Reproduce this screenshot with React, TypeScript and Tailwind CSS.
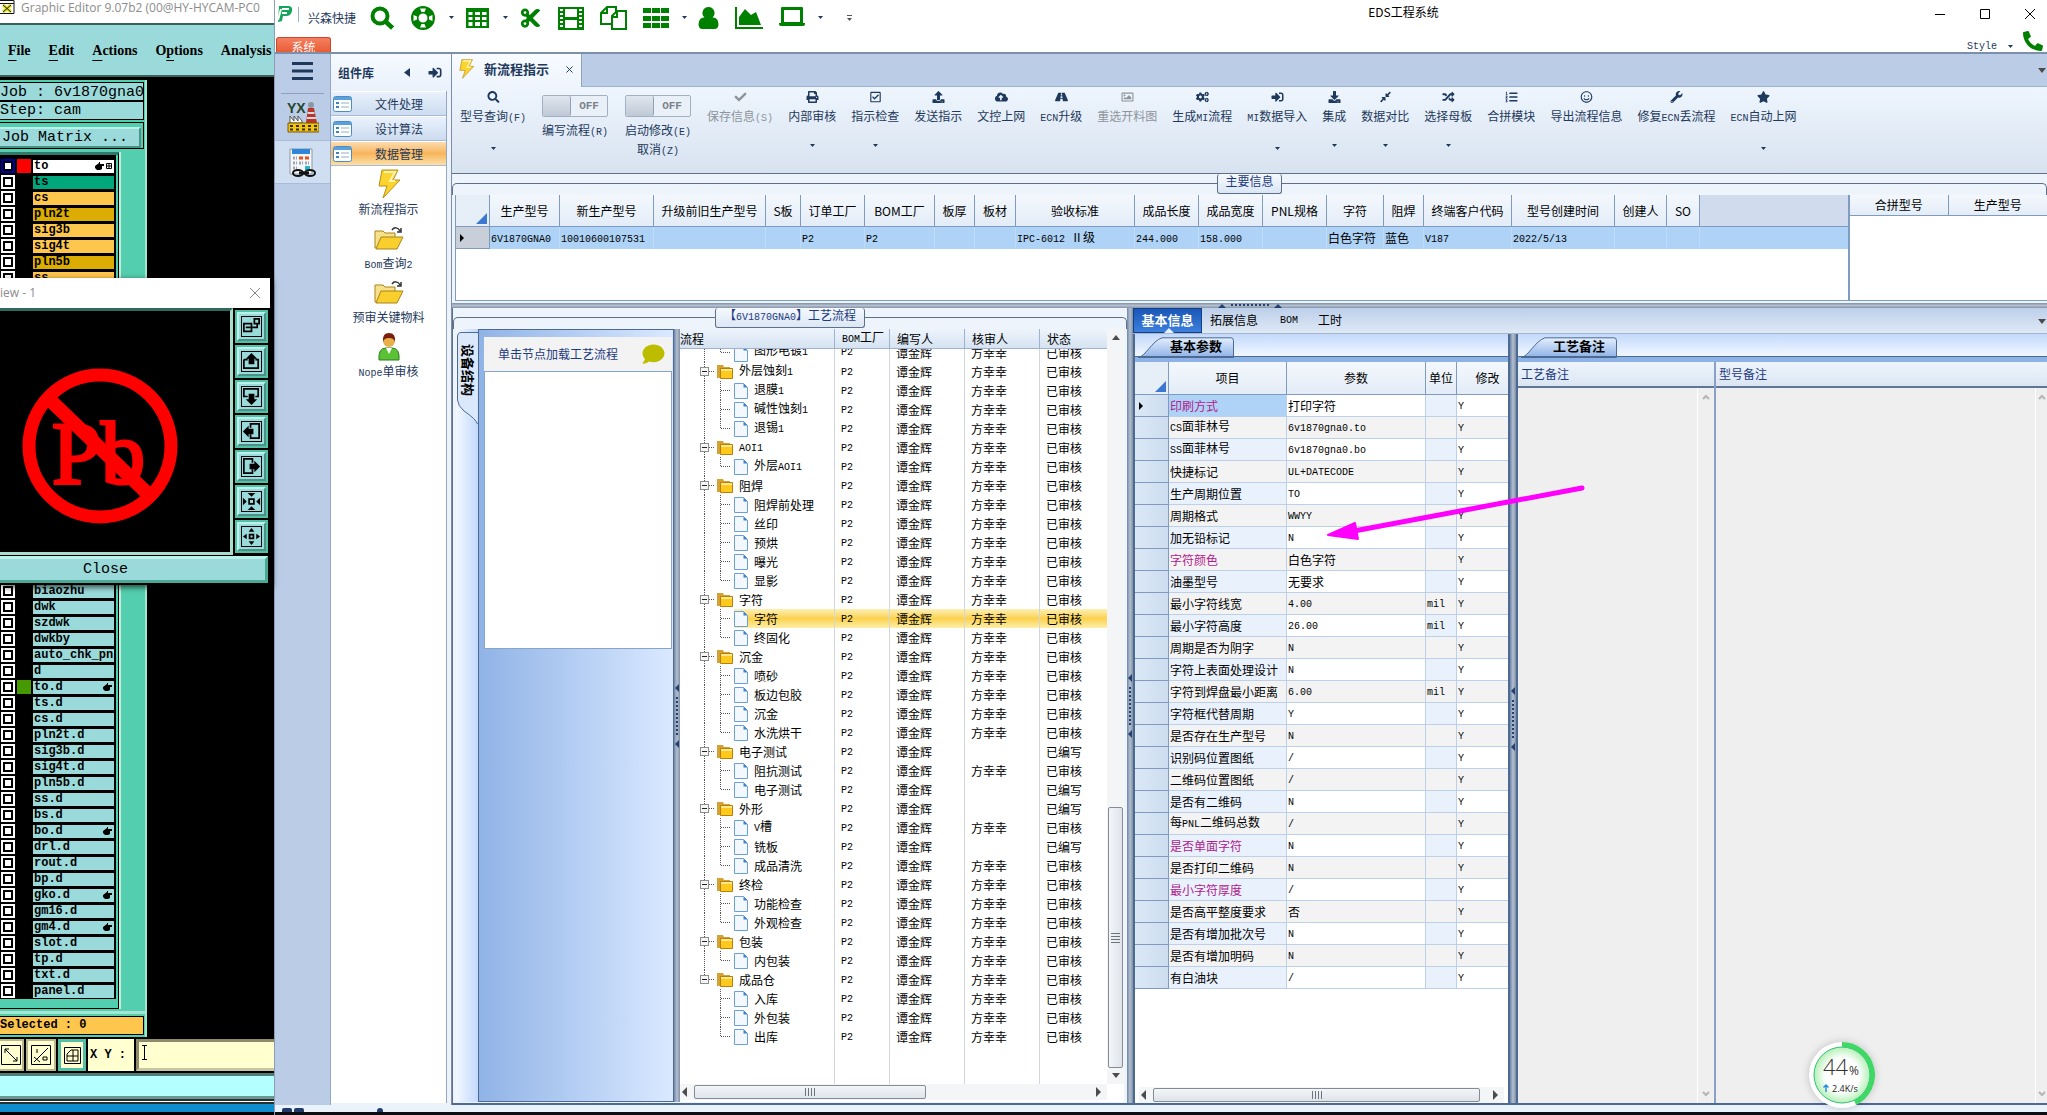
import React from 'react';
import {
  FaSearch, FaCut, FaPhone, FaCheck, FaPrint, FaRegCheckSquare, FaUpload, FaCloudUploadAlt, FaRoad,
  FaRegImage, FaCogs, FaSignInAlt, FaDownload, FaCompressAlt, FaRandom, FaListOl, FaRegSmile, FaWrench, FaStar, FaComment,
} from 'react-icons/fa';

// ---------- data ----------

interface Layer {
  name: string;
  bg: string;
  swatch?: string;
  hand?: boolean;
  active?: boolean;
}

const topLayers: Layer[] = [
  { name: 'to', bg: 'bg-white', swatch: 'bg-[#ff0000]', hand: true, active: true },
  { name: 'ts', bg: 'bg-[#00a67c]' },
  { name: 'cs', bg: 'bg-[#ffc64e]' },
  { name: 'pln2t', bg: 'bg-[#dcad00]' },
  { name: 'sig3b', bg: 'bg-[#ffc64e]' },
  { name: 'sig4t', bg: 'bg-[#ffc64e]' },
  { name: 'pln5b', bg: 'bg-[#dcad00]' },
  { name: 'ss', bg: 'bg-[#ffc64e]' },
];

const handLayers = ['to.d', 'bo.d', 'gko.d', 'gm4.d'];

const bottomLayers: Layer[] = [
  'biaozhu', 'dwk', 'szdwk', 'dwkby', 'auto_chk_pnl', 'd', 'to.d', 'ts.d', 'cs.d', 'pln2t.d', 'sig3b.d', 'sig4t.d', 'pln5b.d',
  'ss.d', 'bs.d', 'bo.d', 'drl.d', 'rout.d', 'bp.d', 'gko.d', 'gm16.d', 'gm4.d', 'slot.d', 'tp.d', 'txt.d', 'panel.d',
].map((name) => ({
  name,
  bg: 'bg-[#9bdada]',
  swatch: name === 'to.d' ? 'bg-[#459a00]' : undefined,
  hand: handLayers.includes(name),
}));

const mainColumns: [string, string, string][] = [
  ['生产型号', 'w-[70px]', '6V1870GNA0'],
  ['新生产型号', 'w-[94px]', '10010600107531'],
  ['升级前旧生产型号', 'w-[112px]', ''],
  ['S板', 'w-[35px]', ''],
  ['订单工厂', 'w-[64px]', 'P2'],
  ['BOM工厂', 'w-[70px]', 'P2'],
  ['板厚', 'w-[40px]', ''],
  ['板材', 'w-[41px]', ''],
  ['验收标准', 'w-[119px]', 'IPC-6012 Ⅱ级'],
  ['成品长度', 'w-[64px]', '244.000'],
  ['成品宽度', 'w-[64px]', '158.000'],
  ['PNL规格', 'w-[64px]', ''],
  ['字符', 'w-[57px]', '白色字符'],
  ['阻焊', 'w-[40px]', '蓝色'],
  ['终端客户代码', 'w-[88px]', 'V187'],
  ['型号创建时间', 'w-[103px]', '2022/5/13'],
  ['创建人', 'w-[52px]', ''],
  ['SO', 'w-[33px]', ''],
];

interface FlowNode {
  name: string;
  folder?: boolean;
  last?: boolean;
  pending?: boolean; // written, not audited yet
  reviewer?: boolean;
}

const flow: [string, boolean, [string, boolean][]][] = [
  ['外层蚀刻1', true, [['退膜1', true], ['碱性蚀刻1', true], ['退锡1', true]]],
  ['AOI1', true, [['外层AOI1', true]]],
  ['阻焊', true, [['阻焊前处理', true], ['丝印', true], ['预烘', true], ['曝光', true], ['显影', true]]],
  ['字符', true, [['字符', true], ['终固化', true]]],
  ['沉金', true, [['喷砂', true], ['板边包胶', true], ['沉金', true], ['水洗烘干', true]]],
  ['电子测试', false, [['阻抗测试', true], ['电子测试', false]]],
  ['外形', false, [['V槽', true], ['铣板', false], ['成品清洗', true]]],
  ['终检', true, [['功能检查', true], ['外观检查', true]]],
  ['包装', true, [['内包装', true]]],
  ['成品仓', true, [['入库', true], ['外包装', true], ['出库', true]]],
];

const flowNodes: FlowNode[] = flow.flatMap(([name, done, children]) => [
  { name, folder: true, reviewer: done, pending: !done },
  ...children.map(([child, ok], i) => ({ name: child, reviewer: ok, pending: !ok, last: i === children.length - 1 })),
]);

const params: [string, string, string?][] = [
  ['印刷方式', '打印字符'],
  ['CS面菲林号', '6v1870gna0.to'],
  ['SS面菲林号', '6v1870gna0.bo'],
  ['快捷标记', 'UL+DATECODE'],
  ['生产周期位置', 'TO'],
  ['周期格式', 'WWYY'],
  ['加无铅标记', 'N'],
  ['字符颜色', '白色字符'],
  ['油墨型号', '无要求'],
  ['最小字符线宽', '4.00', 'mil'],
  ['最小字符高度', '26.00', 'mil'],
  ['周期是否为阴字', 'N'],
  ['字符上表面处理设计', 'N'],
  ['字符到焊盘最小距离', '6.00', 'mil'],
  ['字符框代替周期', 'Y'],
  ['是否存在生产型号', 'N'],
  ['识别码位置图纸', '/'],
  ['二维码位置图纸', '/'],
  ['是否有二维码', 'N'],
  ['每PNL二维码总数', '/'],
  ['是否单面字符', 'N'],
  ['是否打印二维码', 'N'],
  ['最小字符厚度', '/'],
  ['是否高平整度要求', '否'],
  ['是否有增加批次号', 'N'],
  ['是否有增加明码', 'N'],
  ['有白油块', '/'],
];

const required = ['印刷方式', '字符颜色', '是否单面字符', '最小字符厚度'];

// ---------- shared bits ----------

// Latin runs are half the width of a CJK glyph
const T = ({ children }: { children: string }) => (
  <>
    {children.split(/([\x20-\x7e]+)/).map((part, i) =>
      i % 2 ? <span key={i} className="font-['Liberation_Mono',monospace] text-[10px] whitespace-pre">{part}</span> : part
    )}
  </>
);

const Caret = ({ className = '' }: { className?: string }) => (
  <svg className={`w-[5px] h-[3px] shrink-0 ${className}`} viewBox="0 0 5 3"><path d="M0 0h5L2.5 3z" fill="currentColor" /></svg>
);

const Triangle = ({ d }: { d: 'up' | 'down' | 'left' | 'right' }) => {
  const paths = { up: 'M1 7h8L5 2z', down: 'M1 3h8L5 8z', left: 'M7 0v10L2 5z', right: 'M3 0v10l5-5z' };
  return <svg className="w-[10px] h-[10px] shrink-0" viewBox="0 0 10 10"><path d={paths[d]} fill="#4c4c4c" /></svg>;
};

const VHandle = () => (
  <svg className="w-[5px] h-[64px]" viewBox="0 0 5 64">
    <path d="M5 0v8L1 4zM5 56v8l-4-4z" fill="#24416f" />
    <path d="M3 13v38" stroke="#24416f" strokeWidth="2" strokeDasharray="2 2" />
  </svg>
);

const VSplitter = () => (
  <div className="w-[6px] shrink-0 bg-linear-to-r from-[#6f86a8] via-[#b4c0cf] to-[#7f8fa5] flex items-center">
    <VHandle />
  </div>
);

const HScroll = ({ thumb }: { thumb: string }) => (
  <div className="h-[16px] shrink-0 bg-[#f4f5f7] flex items-center justify-between">
    <button aria-label="左移"><Triangle d="left" /></button>
    <div className="flex-1 flex h-[14px] pl-[4px]">
      <div className={`${thumb} border border-[#848b95] rounded-[2px] bg-linear-to-b from-[#f3f5f8] to-[#dfe4ea] flex items-center justify-center gap-[2px]`}>
        {[0, 1, 2, 3].map((i) => <i key={i} className="w-px h-[8px] bg-[#6d747d]" />)}
      </div>
    </div>
    <button aria-label="右移" className="mr-[4px]"><Triangle d="right" /></button>
  </div>
);

const GroupCaption = ({ children, width }: { children: string; width: string }) => (
  <div className="relative h-[21px] shrink-0 flex justify-center">
    <div className="absolute inset-x-0 top-[9px] h-[12px] border-t border-x border-[#5f708b] rounded-t-[5px]" />
    <div className={`relative ${width} h-[20px] border border-t-0 border-[#5f708b] rounded-[3px] bg-linear-to-b from-[#f5f9fe] to-[#dbe7f4] text-center text-[12px] leading-[14px] text-[#1e3a80]`}>
      <T>{children}</T>
    </div>
  </div>
);

const SlantTab = ({ children }: { children: string }) => (
  <div className="h-[28px] shrink-0 bg-linear-to-b from-[#c3d9fb] to-[#f3f8ff] relative border-b-[5px] border-[#8db2e6]">
    <svg className="absolute left-[3px] top-[3px] w-[98px] h-[21px]" viewBox="0 0 98 21">
      <defs>
        <linearGradient id="slant" x1="0" y1="0" x2="0" y2="1">
          <stop offset="0" stopColor="#e3eefd" /><stop offset="1" stopColor="#8db2e6" />
        </linearGradient>
      </defs>
      <path d="M0 20.5C7 20 14 4 24 .8H93q2.500 0 2.500 3V20.500z" fill="url(#slant)" stroke="#4c6a94" />
    </svg>
    <div className="absolute inset-x-0 bottom-0 h-px bg-[#4c6a94]" />
    <button className="relative block ml-[35px] mt-[3px] text-[13px] leading-[18px] font-bold text-black">{children}</button>
  </div>
);

// ---------- left CAM window ----------

const Hand = () => (
  <svg className="w-[9px] h-[8px]" viewBox="0 0 9 8"><path d="M0 4l4-3V0h1v2h4v2H7v3L5 8H2L0 6z" fill="#000" /></svg>
);

const LayerRow: React.FC<{ layer: Layer }> = ({ layer }) => (
  <label className="flex h-[16px] shrink-0 items-center">
    <input
      type="checkbox"
      aria-label={layer.name}
      className={`appearance-none w-[14px] h-[14px] ml-px border-[2px] outline-[2px] outline-offset-[-4px] outline-black bg-white ${layer.active ? 'border-[#0000a0]' : 'border-white'}`}
    />
    <span className={`w-[14px] h-[14px] ml-[2px] ${layer.swatch ?? 'bg-black'}`} />
    <span className={`w-[81px] h-[13px] ml-[2px] pl-px pr-[2px] flex items-center overflow-hidden ${layer.bg}`}>
      <span className="flex-1 whitespace-nowrap font-['Liberation_Mono',monospace] font-bold text-[12px] leading-[13px]">{layer.name}</span>
      {layer.hand && <Hand />}
      {layer.active && <svg className="w-[6px] h-[6px] ml-[2px]" viewBox="0 0 6 6"><path d="M.5.5h5v5h-5zM3 0v6M0 3h6" fill="none" stroke="#000" /></svg>}
    </span>
  </label>
);

const viewIcons: string[] = [
  'M3 8h8v8H3zM14 3h5v5h-5zM5 12h5M12 12h5V8',
  'M3 9h4M15 9h3v9H3V9',
  'M7 11H3V3h15v8h-3',
  'M10 7V3h9v15h-9v-4',
  'M12 7V3H3v15h9v-4',
  'M8.500 8.500h5v5h-5z',
  'M9 9h4v4H9z',
];
const viewFills: string[] = [
  '',
  'M11 2L5 8h3v6h6V8h3z',
  'M8 8h6v6h3l-6 6-6-6h3z',
  'M13 8v6H8v3l-6-6 6-6v3z',
  'M9 8v6h5v3l6-6-6-6v3z',
  'M7 2h8l-4 4zM7 20h8l-4-4zM2 7v8l4-4zM20 7v8l-4-4z',
  'M8 6h6l-3-4zM8 16h6l-3 4zM6 8v6l-4-3zM16 8v6l4-3z',
];

const ViewDialog = () => (
  <div className="absolute left-0 top-[278px] w-[270px] shadow-[2px_2px_6px_rgba(0,0,0,0.7)] bg-black">
    <div className="h-[30px] bg-white flex items-center justify-between pr-[9px] font-['Open_Sans',sans-serif] text-[12px] text-[#8c8c8c]">
      <span>iew - 1</span>
      <button aria-label="关闭视图">
        <svg className="w-[12px] h-[12px]" viewBox="0 0 12 12"><path d="M1 1l10 10M11 1L1 11" stroke="#8a8a8a" /></svg>
      </button>
    </div>
    <div className="flex">
      <div className="flex-1 h-[247px] border-t-[3px] border-t-[#2f6a5e] border-r-[3px] border-b-[3px] border-[#a8dccd] bg-black">
        <svg className="w-full h-full" viewBox="0 0 230 241" preserveAspectRatio="xMinYMin meet">
          <circle cx="100" cy="135" r="71" fill="none" stroke="#f00" strokeWidth="13" />
          <text x="52" y="172" fill="#f00" stroke="#f00" strokeWidth="3" fontFamily="Liberation Serif, serif" fontSize="88">Pb</text>
          <path d="M50 89l96 92" stroke="#f00" strokeWidth="14" />
        </svg>
      </div>
      <div className="w-[37px] pt-[2px] pl-[2px] flex flex-col gap-[2px]">
        {viewIcons.map((d, i) => (
          <button key={d} aria-label={`视图操作${i + 1}`} className="w-[33px] h-[33px] border-[2px] border-[#53bfa5] bg-[#9bdada] flex items-center justify-center">
            <span className="w-[29px] h-[29px] border-[2px] border-t-[#b9f2ea] border-l-[#b9f2ea] border-r-[#4b9186] border-b-[#4b9186] flex items-center justify-center">
              <svg className="w-[21px] h-[21px]" viewBox="0 0 22 22">
                <rect x=".5" y=".5" width="21" height="21" fill="none" stroke="#000" />
                <path d={d} fill="none" stroke="#000" strokeWidth="1.800" />
                <path d={viewFills[i]} fill="#000" />
              </svg>
            </span>
          </button>
        ))}
      </div>
    </div>
    <button className="w-[268px] h-[27px] mt-px mb-[2px] border-[3px] border-l-0 border-t-[#b9f2ea] border-r-[#4ba894] border-b-[#4ba894] bg-[#9bdada] flex items-center justify-center pr-[54px] font-['Liberation_Mono',monospace] text-[15px] leading-none text-black">
      Close
    </button>
  </div>
);

const CamWindow = () => (
  <div className="relative w-[274px] shrink-0 h-full bg-black flex flex-col overflow-hidden">
    <div className="h-[23px] shrink-0 bg-white flex items-start gap-[6px] font-['Open_Sans',sans-serif] text-[12px] leading-[16px] text-[#8c8c8c]">
      <svg className="w-[15px] h-[15px] shrink-0" viewBox="0 0 15 15">
        <path d="M-1 .5h15v13H-1zM-1 3.500h15" fill="#fff" stroke="#111" />
        <path d="M3 5l8 7M11 5l-8 7" stroke="#e3e300" strokeWidth="3" />
        <path d="M3 5l8 7M11 5l-8 7" stroke="#222" />
      </svg>
      <span className="whitespace-nowrap">Graphic Editor 9.07b2 (00@HY-HYCAM-PC0</span>
    </div>
    <nav className="h-[54px] shrink-0 border-t-[2px] border-b-[2px] border-[#35635c] bg-[#9bdada] flex items-center gap-[18px] pl-2 font-['Liberation_Serif',serif] font-bold text-[14px] text-black">
      <button className="shrink-0"><u className="underline-offset-[5px]">F</u>ile</button>
      <button className="shrink-0"><u className="underline-offset-[5px]">E</u>dit</button>
      <button className="shrink-0"><u className="underline-offset-[5px]">A</u>ctions</button>
      <button className="shrink-0">O<u className="underline-offset-[5px]">p</u>tions</button>
      <button className="shrink-0">Analysis</button>
    </nav>

    <div className="w-[147px] flex-1 min-h-0 mt-[3px] flex flex-col bg-[#53ceae] border-r-[2px] border-[#a3e6d3] font-['Liberation_Mono',monospace]">
      <div className="h-[19px] mt-[2px] mr-px border border-l-0 border-black bg-[#9bdada] text-[15px] leading-[19px] whitespace-nowrap overflow-hidden">Job : 6v1870gna0</div>
      <div className="h-[19px] mr-px border border-l-0 border-black bg-[#9bdada] text-[15px] leading-[18px]">Step: cam</div>
      <div className="h-[27px] mt-[2px] mr-px border border-l-0 border-black bg-[#53ceae] p-[2px] pl-0">
        <button className="w-full h-full border-[2px] border-l-0 border-t-[#b9f2ea] border-r-[#4b9186] border-b-[#4b9186] bg-[#9bdada] pl-[2px] text-left text-[15px] leading-[15px] text-black">Job Matrix ...</button>
      </div>
      <div className="flex-1 min-h-0 mt-[3px] flex">
        <div className="w-[119px] h-full border border-l-0 border-black flex flex-col pb-[9px] border-t-[3px] border-t-[#2f7a6a]">
          <div className="w-[116px] flex-1 bg-black flex flex-col min-h-0 justify-between pt-[3px]">
            <div className="flex flex-col">{topLayers.map((l) => <LayerRow key={l.name} layer={l} />)}</div>
            <div className="flex flex-col">{bottomLayers.map((l) => <LayerRow key={l.name} layer={l} />)}</div>
          </div>
        </div>
        <div className="w-[2px] bg-[#bfeedd]" />
      </div>
      <div className="h-[3px] mt-[2px] bg-[#a3e6d3]" />
      <div className="h-[19px] mt-[2px] mb-[2px] mr-px border border-l-0 border-black bg-[#ffc64e] text-[12px] font-bold leading-[17px]">Selected : 0</div>
    </div>

    <div className="h-[33px] shrink-0 mt-[2px] flex gap-[2px] border-b border-black">
      <button aria-label="对角测量" className="w-[24px] bg-[#ffffcf] border-[2px] border-l-0 border-[#b9b58c] flex items-center justify-center">
        <svg className="w-[20px] h-[20px]" viewBox="0 0 20 20"><path d="M.5.5h19v19H.5zM4 4l12 12M4 8V4h4M16 12v4h-4" fill="none" stroke="#000" /></svg>
      </button>
      <button aria-label="角度测量" className="w-[30px] bg-[#ffffcf] border-[2px] border-[#b9b58c] flex items-center justify-center">
        <svg className="w-[20px] h-[20px]" viewBox="0 0 20 20"><path d="M.5.5h19v19H.5zM3 17L17 3M3 12l6 5M12 12h4v3h-4zM6 4v4" fill="none" stroke="#000" /></svg>
      </button>
      <button aria-label="网格" className="w-[28px] bg-[#ffffcf] border-[3px] border-[#53bfa5] flex items-center justify-center">
        <svg className="w-[17px] h-[17px]" viewBox="0 0 17 17"><path d="M.5.5h16v16H.5zM3 14V7l4-4h7v11zM3 9h11M9 3v11" fill="none" stroke="#000" /></svg>
      </button>
      <label htmlFor="xy" className="w-[46px] bg-[#ffffcf] flex items-center font-['Liberation_Mono',monospace] text-[12px] font-bold pl-[2px]">X Y :</label>
      <input id="xy" className="flex-1 min-w-0 bg-[#ffffcf] border-[3px] border-r-0 border-t-[#8f8b6a] border-l-[#8f8b6a] border-b-[#c9c5a0] px-1" />
    </div>
    <svg className="absolute left-[141px] bottom-[55px] w-[7px] h-[15px] pointer-events-none" viewBox="0 0 7 15"><path d="M1 .5h5M1 14.500h5M3.500 1v13" stroke="#000" /></svg>
    <div className="h-[26px] shrink-0 mt-px bg-[#b4ffff] border-t-[3px] border-t-[#4f7d7a] border-b-[3px] border-b-[#6d9794]" />
    <div className="h-[5px] shrink-0 bg-white border-y-[2px] border-y-[#25302f]" />
    <div className="h-[8px] shrink-0 bg-[#0f8ccc] mb-[3px]" />
  </div>
);

// ---------- EDS window: title bar ----------

const GreenIcon = ({ label, d, evenOdd, w = 26 }: { label: string; d: string; evenOdd?: boolean; w?: number }) => (
  <button aria-label={label}>
    <svg width={w} height="24" viewBox={`0 0 ${w} 24`} fill="#008000" fillRule={evenOdd ? 'evenodd' : 'nonzero'}><path d={d} /></svg>
  </button>
);

const TitleBar = () => (
  <header className="relative h-[54px] shrink-0 bg-white border-b-[2px] border-[#7c90ab] flex overflow-hidden">
    <div className="flex items-center h-[35px] pl-px text-[#1e395b]">
      <svg className="w-[17px] h-[18px] -mt-[8px]" viewBox="0 0 17 18">
        <path d="M3 1h9q5 0 4 5t-6 5H7l-1 5-4 1z" fill="#14a55a" />
        <path d="M6 4h7M6 8h5M5 4L2 15" stroke="#fff" strokeWidth="2" fill="none" />
      </svg>
      <i className="w-px h-[15px] ml-[5px] -mt-[6px] bg-[#9bb0ca]" />
      <span className="ml-[9px] text-[12px] leading-[16px]">兴森快捷</span>
      <div className="ml-[14px] flex items-center gap-4 text-[#008000]">
        <button aria-label="搜索">
          <svg width="24" height="24" viewBox="0 0 24 24" fill="none" stroke="#008000"><circle cx="10" cy="10" r="7.500" strokeWidth="4" /><path d="M15.500 15.500l7 6.500" strokeWidth="4.500" /></svg>
        </button>
        <div className="flex items-center gap-[13px] -mr-[5px]">
          <GreenIcon
            label="帮助"
            evenOdd
            d="M13 0a12 12 0 1 0 0 24a12 12 0 1 0 0-24zM13 7.500a4.500 4.500 0 1 1 0 9a4.500 4.500 0 1 1 0-9zM10 2.500h6l-1.500 3.500h-3zM10 21.500h6l-1.500-3.500h-3zM3.500 9v6L7 13.500v-3zM22.500 9v6L19 13.500v-3z"
          />
          <Caret className="text-[#1e395b]" />
        </div>
        <div className="flex items-center gap-[12px] -mr-[5px]">
          <GreenIcon
            label="表格"
            evenOdd
            d="M1 2h23v20H1zM3.500 6v3h4V6zM10 6v3h5V6zM17 6v3h4.500V6zM3.500 11v3h4v-3zM10 11v3h5v-3zM17 11v3h4.500v-3zM3.500 16v4h4v-4zM10 16v4h5v-4zM17 16v4h4.500v-4z"
          />
          <Caret className="text-[#1e395b]" />
        </div>
        <button aria-label="剪切"><FaCut className="w-[23px] h-[22px]" /></button>
        <GreenIcon
          label="胶片"
          evenOdd
          d="M0 1h26v23H0zM7 3v8h12V3zM7 14v8h12v-8zM2 3v2h3V3zM2 7v2h3V7zM2 11v2h3v-2zM2 15v2h3v-2zM2 19v2h3v-2zM21 3v2h3V3zM21 7v2h3V7zM21 11v2h3v-2zM21 15v2h3v-2zM21 19v2h3v-2z"
        />
        <button aria-label="复制">
          <svg width="27" height="24" viewBox="0 0 27 24" fill="#fff" stroke="#008000" strokeWidth="2">
            <path d="M7 1h9v17H1V7zM7 1v6H1" />
            <path d="M17 5h9v18H12V10zM17 5v6h-5" />
          </svg>
        </button>
        <div className="flex items-center gap-[13px] -mr-[5px]">
          <GreenIcon label="列表" d="M0 2h8v5H0zM9 2h8v5H9zM18 2h8v5h-8zM0 10h8v5H0zM9 10h8v5H9zM18 10h8v5h-8zM0 17h8v5H0zM9 17h8v5H9zM18 17h8v5h-8z" />
          <Caret className="text-[#1e395b]" />
        </div>
        <GreenIcon label="用户" w={21} d="M10.500 1a6 6 0 0 1 4 10.500Q20 11 20.500 18q0 5-4 5h-12q-4 0-4-5Q1 11 6.500 11.500a6 6 0 0 1 4-10.500z" />
        <GreenIcon label="图表" w={28} d="M0 1h2v20h26v2H0zM4 19v-8l6-8 6 6 5-3 5 13z" />
        <div className="flex items-center gap-[13px]">
          <GreenIcon label="电脑" evenOdd d="M3 1h20q1 0 1 1v15h2v1q0 2-2 2H2q-2 0-2-2v-1h2V2q0-1 1-1zM5 4v12h16V4z" />
          <Caret className="text-[#1e395b]" />
        </div>
        <button aria-label="更多" className="ml-2 flex flex-col items-center gap-[2px] text-[#555]">
          <i className="w-[5px] h-px bg-[#555]" />
          <Caret />
        </button>
      </div>
    </div>
    <h1 className="flex-1 pl-[38px] text-center text-[12px] leading-[24px] text-black">EDS工程系统</h1>
    <div className="flex flex-col items-end">
      <div className="flex h-[28px] -mr-[5px]">
        {['M0 5.500h10', 'M.5.5h9v9h-9z', 'M0 0l10 10M10 0L0 10'].map((d, i) => (
          <button key={d} aria-label={['最小化', '最大化', '关闭'][i]} className="w-[45px] flex items-center justify-center">
            <svg className="w-[10px] h-[10px]" viewBox="0 0 10 10"><path d={d} fill="none" stroke="#000" /></svg>
          </button>
        ))}
      </div>
      <div className="flex items-start gap-[10px] pr-[4px] text-[#1e395b]">
        <button className="flex items-center gap-[11px] mt-[9px] pt-[4px] h-[15px] font-['Liberation_Mono',monospace] text-[10px] leading-[11px]">
          Style <Caret />
        </button>
        <button aria-label="电话"><FaPhone className="w-[20px] h-[20px] mt-[3px] text-[#008000] -scale-x-100" /></button>
      </div>
    </div>
    <button className="absolute left-px bottom-0 w-[55px] h-[15px] rounded-t-[3px] border border-b-0 border-[#c9472a] bg-linear-to-b from-[#f58060] to-[#e85c34] text-[12px] leading-[18px] text-white">系统</button>
  </header>
);

// ---------- EDS window: navigation ----------

const Rail = () => (
  <div className="w-[56px] shrink-0 bg-[#bbcde6] border-r border-[#93a8c8] flex flex-col">
    <div className="h-[40px] mx-[6px] border-b border-[#8ea3c3] flex items-center justify-center">
      <button aria-label="菜单">
        <svg className="w-[21px] h-[18px] -mt-[6px]" viewBox="0 0 21 18"><path d="M0 1.500h21M0 9h21M0 16.500h21" stroke="#1e395b" strokeWidth="3" /></svg>
      </button>
    </div>
    <button aria-label="工厂" className="h-[47px] flex items-center justify-center border-b border-[#a8bcd9]">
      <svg className="w-[32px] h-[32px]" viewBox="0 0 32 32">
        <text x="0" y="12" fontFamily="Liberation Sans, sans-serif" fontWeight="bold" fontSize="14" fill="#24472c">YX</text>
        <circle cx="24" cy="4" r="3" fill="#8e98a4" />
        <path d="M21 7h6l3 15H19z" fill="#b8342c" />
        <path d="M20.500 12h7M20 17h9" stroke="#d9d9d9" strokeWidth="2" />
        <path d="M3 22v-7l4 5v-5l4 5v-5l4 5v2z" fill="#fff" stroke="#555" />
        <path d="M1 22h31v9H1z" fill="#f0c419" stroke="#7a5d00" />
        <path d="M3 25h28M3 28.500h28" stroke="#3b3300" strokeWidth="2" strokeDasharray="3 3" />
      </svg>
    </button>
    <button aria-label="日历" className="h-[43px] bg-[#cfdef1] border-b border-[#a8bcd9] flex items-center justify-center">
      <svg className="w-[28px] h-[32px]" viewBox="0 0 28 32">
        <path d="M1 3h22v25H1z" fill="#f4f6f8" stroke="#8b97a5" />
        <path d="M3 3h18v5H3z" fill="#2d86d9" />
        <path d="M4 12h4M4 17h4M4 22h4M10 17h4M16 17h4" stroke="#9aa6b4" strokeWidth="3" strokeDasharray="2 1" />
        <path d="M10 12h4M16 12h4" stroke="#e8501e" strokeWidth="3" />
        <path d="M16 20h5v4h-5z" fill="#29b4c8" />
        <ellipse cx="9" cy="27" rx="5" ry="3" fill="none" stroke="#111" strokeWidth="2" />
        <ellipse cx="21" cy="27" rx="5" ry="3" fill="none" stroke="#111" strokeWidth="2" />
        <path d="M10 27h10" stroke="#111" strokeWidth="3" />
      </svg>
    </button>
  </div>
);

const Bolt = ({ className }: { className: string }) => (
  <svg className={className} viewBox="0 0 22 30"><path d="M4 1h16l-5 10h7L5 29l4-12H1z" fill="#fbd42f" stroke="#b98e12" /><path d="M6 3h11l-5 9h5" fill="none" stroke="#fff3b0" strokeWidth="2" /></svg>
);

const BigFolder = () => (
  <svg className="w-[30px] h-[24px]" viewBox="0 0 30 24">
    <path d="M1 5h8l2 2h10v4L6 22H1z" fill="#f7e08a" stroke="#a8841a" />
    <path d="M7 11h22l-6 12H2z" fill="#f8cf2c" stroke="#a8841a" />
    <path d="M18 4c2-3 6-3 8 1M27 2v4h-4" fill="none" stroke="#333" strokeWidth="1.500" />
  </svg>
);

const Person = () => (
  <svg className="w-[22px] h-[29px]" viewBox="0 0 22 29">
    <path d="M1 28q-1-12 7-12h6q8 0 7 12z" fill="#5bc236" stroke="#2f7d1a" />
    <path d="M8 16l3 6 3-6z" fill="#fff" />
    <circle cx="11" cy="9" r="6" fill="#e8b04b" />
    <path d="M5 10Q4 1 11 1t6 9q-1-4-6-4t-6 4z" fill="#7a1f10" />
  </svg>
);

const components: [string, React.ReactNode][] = [
  ['新流程指示', <Bolt className="w-[22px] h-[30px]" />],
  ['Bom查询2', <BigFolder />],
  ['预审关键物料', <BigFolder />],
  ['Nope单审核', <Person />],
];

const ComponentPanel = () => (
  <aside className="w-[121px] shrink-0 bg-[#eef3fa] border-r border-[#7b8fad] flex flex-col text-[#1e395b] pb-[2px]">
    <div className="h-[37px] shrink-0 flex items-center pl-[7px] pr-[9px] bg-linear-to-b from-[#f6faff] to-[#e9f1fb]">
      <h2 className="flex-1 text-[12px] font-bold leading-[16px]">组件库</h2>
      <button aria-label="收起" className="mr-[18px]"><svg className="w-[6px] h-[9px]" viewBox="0 0 6 9"><path d="M6 0v9L0 4.500z" fill="#1e395b" /></svg></button>
      <button aria-label="固定"><FaSignInAlt className="w-[14px] h-[13px]" /></button>
    </div>
    <div className="flex-1 w-[116px] bg-white border-r border-[#93a8c8]">
      {['文件处理', '设计算法', '数据管理'].map((name, i) => (
        <button
          key={name}
          className={`w-full h-[25px] flex items-center pl-[2px] border-t border-b border-b-[#a9bbd6] border-t-white text-[12px] leading-[16px] ${
            i === 2 ? 'bg-linear-to-b from-[#fbdcae] via-[#f8b55a] to-[#fbe0a6]' : 'bg-linear-to-b from-[#eaf2fc] to-[#ccdcf0]'
          }`}
        >
          <svg className="w-[19px] h-[16px]" viewBox="0 0 19 16">
            <rect x=".5" y=".5" width="18" height="15" rx="2" fill="#fff" stroke="#4a8cc4" />
            <path d="M1 2.500h17" stroke="#5aa0da" strokeWidth="3" />
            <path d="M3 7h3M3 11h3" stroke="#3b82c4" strokeWidth="2" />
            <path d="M8 7h8M8 11h8" stroke="#c9d6e4" strokeWidth="2" />
          </svg>
          <span className="flex-1">{name}</span>
        </button>
      ))}
      <div className="flex flex-col pt-[2px]">
        {components.map(([name, icon]) => (
          <button key={name} className="h-[54px] flex flex-col items-center">
            <span className="h-[32px] flex items-center">{icon}</span>
            <span className="text-[12px] leading-[18px]"><T>{name}</T></span>
          </button>
        ))}
      </div>
    </div>
  </aside>
);

// ---------- ribbon ----------

interface RibbonItem {
  label: string;
  icon: React.ReactNode;
  menu?: boolean;
  disabled?: boolean;
}

const ico = 'w-[13px] h-[12px]';

const ribbonItems: RibbonItem[] = [
  { label: '保存信息(S)', icon: <FaCheck className={ico} />, disabled: true },
  { label: '内部审核', icon: <FaPrint className={ico} />, menu: true },
  { label: '指示检查', icon: <FaRegCheckSquare className={ico} />, menu: true },
  { label: '发送指示', icon: <FaUpload className={ico} /> },
  { label: '文控上网', icon: <FaCloudUploadAlt className={ico} /> },
  { label: 'ECN升级', icon: <FaRoad className={ico} /> },
  { label: '重选开料图', icon: <FaRegImage className={ico} />, disabled: true },
  { label: '生成MI流程', icon: <FaCogs className={ico} /> },
  { label: 'MI数据导入', icon: <FaSignInAlt className={ico} />, menu: true },
  { label: '集成', icon: <FaDownload className={ico} />, menu: true },
  { label: '数据对比', icon: <FaCompressAlt className={ico} />, menu: true },
  { label: '选择母板', icon: <FaRandom className={ico} />, menu: true },
  { label: '合拼模块', icon: <FaListOl className={ico} /> },
  { label: '导出流程信息', icon: <FaRegSmile className={ico} /> },
  { label: '修复ECN丢流程', icon: <FaWrench className={ico} /> },
  { label: 'ECN自动上网', icon: <FaStar className={ico} />, menu: true },
];

const RibbonButton: React.FC<{ item: RibbonItem }> = ({ item }) => (
  <button disabled={item.disabled} className="flex flex-col items-center shrink-0 disabled:text-[#8d949c]">
    <span className="h-[16px] flex items-center">{item.icon}</span>
    <span className="mt-[3px] text-[12px] leading-[16px] whitespace-nowrap"><T>{item.label}</T></span>
    {item.menu && <Caret className="mt-[20px]" />}
  </button>
);

const Switch = ({ label, extra }: { label: string; extra?: string }) => (
  <div className="flex flex-col items-center shrink-0 pt-[6px] px-px">
    <label className="flex flex-col items-center">
      <span className="w-[66px] h-[22px] flex border border-[#a3b0c2] rounded-[2px] bg-[#eaf0f7]">
        <input type="checkbox" role="switch" className="appearance-none w-[28px] h-full border-r border-[#93a1b5] rounded-[2px] bg-linear-to-b from-[#e0e6ee] to-[#bfc9d6]" />
        <span className="flex-1 text-center font-['Liberation_Mono',monospace] font-bold text-[11px] leading-[20px] text-[#7a818b]">OFF</span>
      </span>
      <span className="mt-[5px] text-[12px] leading-[16px] whitespace-nowrap"><T>{label}</T></span>
    </label>
    {extra && <button className="text-[12px] leading-[16px]"><T>{extra}</T></button>}
  </div>
);

const Ribbon = () => (
  <div className="h-[86px] shrink-0 flex items-start gap-[15px] pl-[8px] pt-[2px] overflow-hidden bg-linear-to-b from-[#eef5fd] to-[#d8e3f0] text-[#1e395b]">
    <RibbonButton item={{ label: '型号查询(F)', icon: <FaSearch className={ico} />, menu: true }} />
    <Switch label="编写流程(R)" />
    <Switch label="启动修改(E)" extra="取消(Z)" />
    {ribbonItems.map((item) => <RibbonButton key={item.label} item={item} />)}
  </div>
);

// ---------- main info ----------

const Corner = () => <svg className="w-[11px] h-[11px] ml-auto mr-[2px] mt-[16px]" viewBox="0 0 11 11"><path d="M11 0v11H0z" fill="#3c78d2" /></svg>;

const MainInfo = () => (
  <section className="h-[130px] shrink-0 border-t border-[#5f708b] bg-[#eef4fc] flex flex-col">
    <GroupCaption width="w-[65px]">主要信息</GroupCaption>
    <div className="flex-1 min-h-0 flex gap-[2px] ml-[3px] mb-[2px] bg-[#7f9bc0] border border-t-0 border-r-0 border-[#7f9bc0] font-['Noto_Sans_CJK_SC',sans-serif]">
      <div className="flex-1 min-w-0 bg-white">
        <table className="w-full table-fixed border-separate border-spacing-0 text-[12px] text-black">
          <thead>
            <tr className="h-[32px]">
              <th className="w-[34px] p-0 border-r border-b border-[#7f9bc0] bg-[#e6eef8]"><Corner /></th>
              {mainColumns.map(([name, w]) => (
                <th key={name} className={`${w} p-0 border-r border-b border-[#7f9bc0] bg-linear-to-b from-[#f4f8fd] to-[#e3ecf7] font-normal leading-[16px] whitespace-nowrap`}>{name}</th>
              ))}
              <th className="p-0 border-b border-[#7f9bc0] bg-[#d0dcee]" />
            </tr>
          </thead>
          <tbody>
            <tr className="h-[22px] bg-[#aed3f7]">
              <td className="p-0 pl-[4px] bg-[#c9cfd8] border-r border-b border-[#7f9bc0]">
                <svg className="w-[4px] h-[8px]" viewBox="0 0 4 8"><path d="M0 0v8l4-4z" /></svg>
              </td>
              {mainColumns.map(([name, , value]) => (
                <td key={name} className="p-0 pl-px border-r border-[#bedcf8] leading-[16px] whitespace-nowrap"><T>{value}</T></td>
              ))}
              <td className="p-0" />
            </tr>
          </tbody>
        </table>
      </div>
      <div className="w-[197px] shrink-0 bg-white">
        <table className="w-full table-fixed border-separate border-spacing-0 text-[12px] text-black">
          <thead>
            <tr className="h-[21px]">
              <th className="p-0 border-r border-b border-[#7f9bc0] bg-linear-to-b from-[#f4f8fd] to-[#e3ecf7] font-normal leading-[16px]">合拼型号</th>
              <th className="p-0 border-b border-[#7f9bc0] bg-linear-to-b from-[#f4f8fd] to-[#e3ecf7] font-normal leading-[16px]">生产型号</th>
            </tr>
          </thead>
        </table>
      </div>
    </div>
  </section>
);

// ---------- process tree ----------

const FolderIcon = () => (
  <svg className="w-[16px] h-[16px] shrink-0" viewBox="0 0 16 16">
    <path d="M0 2V1h6l1 2h6v11H0z" fill="#d3a136" />
    <path d="M3.500 4.500h12v10h-12z" fill="#fdc91c" stroke="#b97f0a" />
    <path d="M4 6h11" stroke="#ffe88a" strokeWidth="2" />
  </svg>
);

const DocIcon = () => (
  <svg className="w-[14px] h-[16px] shrink-0" viewBox="0 0 14 16">
    <path d="M.5.5h9l4 4v11H.5z" fill="#f2f8fe" stroke="#6b9fdb" />
    <path d="M9.500.5v4h4z" fill="#3f7fd0" />
  </svg>
);

const TreeLines = ({ node, trunk }: { node: FlowNode; trunk: 'full' | 'half' | 'none' }) => (
  <svg className={`${node.folder ? 'w-[37px]' : 'w-[54px]'} h-[19px] shrink-0`} fill="none" stroke="#555" strokeDasharray="1 1">
    {trunk !== 'none' && <path d={trunk === 'full' ? 'M24.500 0v19' : 'M24.500 0v9'} />}
    {node.folder ? (
      <>
        <path d="M29 9.500h6" />
        <rect x="20.500" y="5.500" width="8" height="8" fill="#f6f6f6" stroke="#8e8e8e" strokeDasharray="none" />
        <path d="M22 9.500h5" stroke="#222" strokeDasharray="none" />
      </>
    ) : (
      <>
        <path d={node.last ? 'M40.500 0v9' : 'M40.500 0v19'} />
        <path d="M41 9.500h10" />
      </>
    )}
  </svg>
);

const selGradient = 'bg-linear-to-b from-[#fdf0b4] via-[#fbd24a] to-[#fdeea6]';

const ProcessTree = () => {
  const lastFolder = flowNodes.map((n) => !!n.folder).lastIndexOf(true);
  const cell = 'p-0 border-r border-[#d3d6db] whitespace-nowrap';
  const head = 'h-[18px] p-0 text-left font-normal leading-[16px] border-r border-b border-[#9fb3cf] bg-linear-to-b from-[#eef4fc] to-[#d6e3f2]';
  return (
    <div className="flex-1 min-w-0 bg-white flex flex-col">
      <div className="flex-1 min-h-0 flex overflow-hidden">
        <table className="w-[427px] h-max table-fixed border-separate border-spacing-0 text-[12px] leading-[16px] text-black">
          <thead>
            <tr>
              <th className={`w-[155px] ${head}`}>流程</th>
              <th className={`w-[55px] pl-[7px]! ${head}`}><T>BOM工厂</T></th>
              <th className={`w-[75px] pl-[7px]! ${head}`}>编写人</th>
              <th className={`w-[75px] pl-[7px]! ${head}`}>核审人</th>
              <th className={`pl-[7px]! ${head} border-r-0`}>状态</th>
            </tr>
          </thead>
          <tbody>
            {/* row scrolled half under the header */}
            <tr>
              <td className={cell}>
                <div className="h-[13px] overflow-hidden flex items-end">
                  <TreeLines node={{ name: '', last: true }} trunk="full" /><DocIcon /><span className="ml-[6px] leading-[18px]"><T>图形电镀1</T></span>
                </div>
              </td>
              {['P2', '谭金辉', '方幸幸', '已审核'].map((v, i) => (
                <td key={v} className={`${cell} pl-[6px]! ${i === 3 ? 'border-r-0' : ''}`}>
                  <div className="h-[13px] overflow-hidden flex items-end"><span className="leading-[18px]"><T>{v}</T></span></div>
                </td>
              ))}
            </tr>
            {flowNodes.map((node, i) => {
              const selected = node.name === '字符' && !node.folder;
              const bg = selected ? selGradient : '';
              return (
                <tr key={i} className="h-[19px]">
                  <td className={cell}>
                    <div className="h-[19px] flex items-center">
                      <TreeLines node={node} trunk={i < lastFolder ? 'full' : i === lastFolder ? 'half' : 'none'} />
                      <div className={`flex-1 h-full flex items-center ${bg}`}>
                        {node.folder ? <FolderIcon /> : <DocIcon />}
                        <span className="ml-[6px]"><T>{node.name}</T></span>
                      </div>
                    </div>
                  </td>
                  <td className={`${cell} pl-[6px]! ${bg}`}><T>P2</T></td>
                  <td className={`${cell} pl-[6px]! ${bg}`}>谭金辉</td>
                  <td className={`${cell} pl-[6px]! ${bg}`}>{node.reviewer ? '方幸幸' : ''}</td>
                  <td className={`${cell} pl-[6px]! ${bg} border-r-0`}>{node.pending ? '已编写' : '已审核'}</td>
                </tr>
              );
            })}
            <tr className="h-[60px]">
              <td className={cell} /><td className={cell} /><td className={cell} /><td className={cell} /><td />
            </tr>
          </tbody>
        </table>
        <div className="flex-1 bg-[#f4f5f7] flex flex-col items-center py-[4px]">
          <button aria-label="上移"><Triangle d="up" /></button>
          <div className="flex-1 w-full px-px flex flex-col justify-end pb-[2px]">
            <div className="h-[261px] border border-[#848b95] rounded-[2px] bg-linear-to-r from-[#f3f5f8] to-[#dfe4ea] flex flex-col items-center justify-center gap-[2px]">
              {[0, 1, 2, 3].map((i) => <i key={i} className="w-[9px] h-px bg-[#6d747d]" />)}
            </div>
          </div>
          <button aria-label="下移"><Triangle d="down" /></button>
        </div>
      </div>
      <div className="pr-[17px] pb-[2px] flex flex-col"><HScroll thumb="w-[232px]" /></div>
    </div>
  );
};

const ProcessPanel = () => (
  <section className="w-[675px] shrink-0 bg-[#eef4fc] border-l border-[#5f708b] flex flex-col">
    <GroupCaption width="w-[150px]">【6V1870GNA0】工艺流程</GroupCaption>
    <div className="flex-1 min-h-0 flex mx-[3px] mb-px">
      <div className="relative w-[22px] shrink-0 bg-linear-to-r from-[#f3f8ff] to-[#c3d9fb]">
        <svg className="absolute left-0 top-[3px] w-[22px] h-[92px]" viewBox="0 0 22 92">
          <path d="M22 .5H5Q1.500.5 1.500 5V68Q2 74 8 79q12 8 13.500 13" fill="#dbe8fb" stroke="#4c6a94" />
        </svg>
        <button className="relative block ml-[4px] mt-[15px] [writing-mode:vertical-rl] [text-orientation:sideways] text-[13px] leading-[16px] font-bold text-black">设备结构</button>
      </div>
      <div className="w-[196px] shrink-0 border border-[#4c6a94] bg-linear-to-r from-[#90b3e6] to-[#dae9ff] pt-[7px] px-[5px] pr-px">
        <div className="h-[34px] bg-[#f3f3f3] flex items-center justify-between pl-[14px] pr-[6px] text-[12px] leading-[16px] text-[#1e3a80]">
          <span>单击节点加载工艺流程</span>
          <FaComment className="w-[25px] h-[22px] text-[#bdbd00]" />
        </div>
        <div className="h-[278px] bg-white border border-[#8aa3c9]" />
      </div>
      <VSplitter />
      <ProcessTree />
    </div>
  </section>
);

// ---------- parameters and notes ----------

const ParamPanel = () => (
  <section className="w-[377px] shrink-0 bg-white border-x-[2px] border-[#4c6a94] flex flex-col">
    <SlantTab>基本参数</SlantTab>
    <div className="flex-1 min-h-0 overflow-hidden">
      <table className="w-full table-fixed border-separate border-spacing-0 text-[12px] leading-[16px] text-black">
        <thead>
          <tr className="h-[33px] font-['Noto_Sans_CJK_SC',sans-serif]">
            <th className="w-[34px] p-0 border-r border-b border-[#7f9bc0] bg-[#e6eef8]"><Corner /></th>
            {[['项目', 'w-[118px]'], ['参数', 'w-[139px]'], ['单位', 'w-[31px]'], ['修改', '']].map(([name, w]) => (
              <th key={name} className={`${w} p-0 border-r border-b border-[#7f9bc0] bg-linear-to-b from-[#f4f8fd] to-[#e3ecf7] font-normal last:border-r-0 last:pl-[10px]`}>{name}</th>
            ))}
          </tr>
        </thead>
        <tbody>
          {params.map(([name, value, unit], i) => {
            const even = i % 2 === 0;
            const lead = even ? 'bg-[#e8f1fc]' : 'bg-[#f3f3f3]';
            const plain = even ? 'bg-white' : 'bg-[#f3f3f3]';
            const line = 'p-0 pl-px border-r border-b border-[#bdd0ea] whitespace-nowrap';
            return (
              <tr key={name} className="h-[22px]">
                <td className="p-0 pl-[4px] border-r border-b border-[#7f9bc0] bg-linear-to-r from-[#dbe8f6] to-[#cdddef]">
                  {i === 0 && <svg className="w-[4px] h-[8px]" viewBox="0 0 4 8"><path d="M0 0v8l4-4z" /></svg>}
                </td>
                <td className={`${line} ${i === 0 ? 'bg-[#aed3f7]' : lead} ${required.includes(name) ? 'text-[#b0208c]' : ''}`}><T>{name}</T></td>
                <td className={`${line} ${plain}`}><T>{value}</T></td>
                <td className={`${line} ${lead}`}><T>{unit ?? ''}</T></td>
                <td className={`${line} ${plain} border-r-0`}><T>Y</T></td>
              </tr>
            );
          })}
        </tbody>
      </table>
    </div>
    <div className="px-[4px] flex flex-col"><HScroll thumb="w-[327px]" /></div>
  </section>
);

const Chevron = ({ up }: { up?: boolean }) => (
  <svg className="w-[8px] h-[6px]" viewBox="0 0 8 6"><path d={up ? 'M1 5l3-3 3 3' : 'M1 1l3 3 3-3'} fill="none" stroke="#b5b5b5" strokeWidth="2" /></svg>
);

const NoteColumn = ({ id, title, className, rail }: { id: string; title: string; className: string; rail: string }) => (
  <div className={`flex flex-col ${className}`}>
    <label htmlFor={id} className="h-[26px] shrink-0 pl-[3px] border-b-[2px] border-[#5f7698] bg-linear-to-b from-[#eef4fc] to-[#dbe6f3] text-[12px] leading-[24px] text-[#1e3a80]">{title}</label>
    <div className="flex-1 min-h-0 flex bg-[#efefef]">
      <textarea id={id} className="flex-1 min-w-0 resize-none bg-[#efefef] outline-none" />
      <div className={`${rail} shrink-0 border-l border-white flex flex-col items-center justify-between py-[6px]`}>
        <Chevron up />
        <Chevron />
      </div>
    </div>
  </div>
);

const NotesPanel = () => (
  <section className="flex-1 min-w-0 border-l-[2px] border-[#4c6a94] flex flex-col">
    <SlantTab>工艺备注</SlantTab>
    <div className="flex-1 min-h-0 flex">
      <NoteColumn id="craft" title="工艺备注" className="w-[198px] shrink-0 border-r-[2px] border-[#8aa0c4]" rail="w-[17px]" />
      <NoteColumn id="model" title="型号备注" className="flex-1 min-w-0" rail="w-[12px]" />
    </div>
  </section>
);

const InfoTabs = () => (
  <div className="h-[26px] shrink-0 border-b border-[#a5b6cf] bg-linear-to-b from-[#bccfe9] to-[#dfe9f6] flex items-center text-[12px] leading-[16px] text-black">
    <button className="relative w-[69px] h-full pb-[2px] bg-linear-to-b from-[#1a57b8] to-[#3d7fdc] border border-[#123f86] text-white text-[13px] font-bold">
      基本信息
      <i className="absolute left-[30px] bottom-[-1px] border-x-[5px] border-b-[5px] border-x-transparent border-b-[#e7f0fb]" />
    </button>
    <button className="ml-[8px] pb-[2px]">拓展信息</button>
    <button className="ml-[22px] pb-[2px]"><T>BOM</T></button>
    <button className="ml-[20px] pb-[2px]">工时</button>
    <button aria-label="更多页签" className="ml-auto"><Triangle d="down" /></button>
  </div>
);

const EdsWindow = () => (
  <div className="flex-1 min-w-0 flex flex-col border-l border-[#8c9db5] bg-[#eef4fc]">
    <TitleBar />
    <div className="flex-1 min-h-0 flex">
      <Rail />
      <ComponentPanel />
      <main className="flex-1 min-w-0 flex flex-col">
        <div className="h-[33px] shrink-0 bg-[#bbcde6] border-b border-[#9db1cf] flex items-center">
          <div className="h-[33px] w-[130px] flex items-center pl-[7px] pb-[2px] border-r border-[#8ea3c3] bg-linear-to-b from-[#f8fbff] to-[#eef5fd]">
            <Bolt className="w-[15px] h-[20px]" />
            <button className="ml-[10px] text-[13px] leading-[18px] font-bold text-[#1e395b]">新流程指示</button>
            <button aria-label="关闭页签" className="ml-[17px]"><svg className="w-[7px] h-[7px]" viewBox="0 0 7 7"><path d="M.5.5l6 6M6.500.5l-6 6" stroke="#1e395b" /></svg></button>
          </div>
          <button aria-label="页签列表" className="ml-auto"><Triangle d="down" /></button>
        </div>
        <Ribbon />
        <MainInfo />
        <div className="h-[5px] shrink-0 flex justify-center items-center bg-linear-to-b from-[#7f8fa5] via-[#b4c0cf] to-[#8795aa]">
          <svg className="w-[64px] h-[5px]" viewBox="0 0 64 5">
            <path d="M0 5h8L4 1zM56 5h8l-4-4z" fill="#24416f" />
            <path d="M13 2h38" stroke="#24416f" strokeWidth="2" strokeDasharray="2 2" />
          </svg>
        </div>
        <div className="flex-1 min-h-0 flex border-b-[2px] border-[#4c6a94]">
          <ProcessPanel />
          <VSplitter />
          <div className="flex-1 min-w-0 flex flex-col">
            <InfoTabs />
            <div className="flex-1 min-h-0 flex">
              <ParamPanel />
              <VSplitter />
              <NotesPanel />
            </div>
          </div>
        </div>
      </main>
    </div>
    <footer className="h-[7px] shrink-0 bg-[#eaf2fb] overflow-hidden flex gap-[2px] pl-[7px] pt-[3px]">
      <i className="w-[10px] h-[6px] rounded-t-[2px] bg-[#1f3a6b]" />
      <i className="w-[10px] h-[6px] rounded-t-[2px] bg-[#1f3a6b]" />
      <i className="w-[6px] h-[6px] ml-[71px] rounded-t-[3px] bg-[#1f3a6b]" />
    </footer>
    <div className="h-[3px] shrink-0 bg-[#0c0d10]" />
  </div>
);

// floating network meter
const SpeedBall = () => (
  <div className="absolute right-[172px] bottom-[7px] w-[66px] h-[66px] rounded-full bg-white shadow-[0_0_8px_rgba(0,0,0,0.2)]">
    <svg className="w-full h-full" viewBox="0 0 66 66">
      <defs>
        <radialGradient id="ball"><stop offset="0.6" stopColor="#fff" /><stop offset="1" stopColor="#b5f0b8" /></radialGradient>
      </defs>
      <circle cx="33" cy="33" r="28" fill="url(#ball)" stroke="#2fbf71" />
      <path d="M33 2.500a30.500 30.500 0 0 1 13 58.100" fill="none" stroke="#3fd867" strokeWidth="5" />
      <text x="14" y="33" fontFamily="Open Sans, sans-serif" fontWeight="300" fontSize="22" fill="#333">44</text>
      <text x="40" y="33" fontFamily="Open Sans, sans-serif" fontSize="12" fill="#333">%</text>
      <path d="M17 50v-7M14.500 45.500L17 43l2.500 2.500" fill="none" stroke="#2a8fe0" strokeWidth="1.500" />
      <text x="23" y="50" fontFamily="Open Sans, sans-serif" fontSize="9" fill="#222">2.4K/s</text>
    </svg>
  </div>
);

const App: React.FC = () => (
  <div className="relative h-screen flex overflow-hidden bg-white font-['Noto_Sans_CJK_SC',sans-serif]">
    <CamWindow />
    <EdsWindow />
    <ViewDialog />
    <svg className="absolute left-[1324px] top-[484px] w-[262px] h-[60px] pointer-events-none" viewBox="0 0 262 60">
      <path d="M30 47L258 4" stroke="#ff00ff" strokeWidth="5" strokeLinecap="round" />
      <path d="M4 51l27-12 3 16z" fill="#ff00ff" stroke="#ff00ff" strokeWidth="2" strokeLinejoin="round" />
    </svg>
    <SpeedBall />
  </div>
);

export default App;
